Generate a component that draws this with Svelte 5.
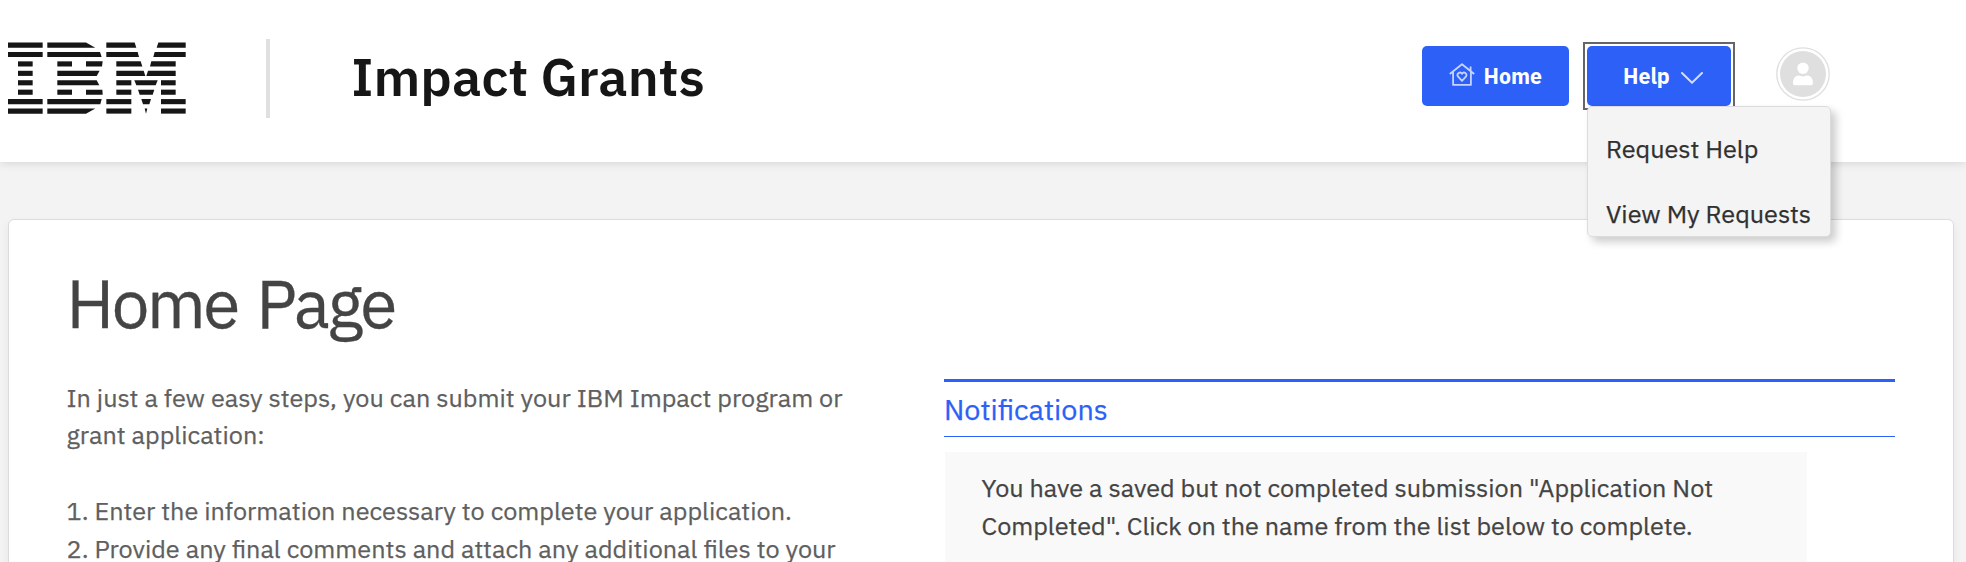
<script>
  const menu = ['Request Help', 'View My Requests'];
  const intro = ['In just a few easy steps, you can submit your IBM Impact program or', 'grant application:'];
  const steps = [
    '1. Enter the information necessary to complete your application.',
    '2. Provide any final comments and attach any additional files to your'
  ];
  const notice = [
    'You have a saved but not completed submission "Application Not',
    'Completed". Click on the name from the list below to complete.'
  ];
  // Each inner list holds the stripe segments of one row as [top-left, top-right, bottom-right, bottom-left].
  const stripes = [
    [[24,128,128,24],[142,258,286,142],[319,404,409,319],[475,557,557,470]],
    [[24,128,128,24],[142,300,305,142],[319,413,417,319],[464,557,557,460]],
    [[54,98,98,54],[172,216,216,172],[258,308,306,258],[349,422,427,349],[454,527,527,450]],
    [[54,98,98,54],[172,299,290,172],[349,431,436,349],[444,527,527,439]],
    [[54,98,98,54],[172,290,298,172],[349,394,394,349],[403,473,467,409],[483,527,527,483]],
    [[54,98,98,54],[172,216,216,172],[258,307,308,258],[349,394,394,349],[414,463,458,419],[483,527,527,483]],
    [[24,128,128,24],[142,305,301,142],[319,394,394,319],[424,453,448,429],[483,557,557,483]],
    [[24,128,128,24],[142,286,258,142],[319,394,394,319],[434,442,438,438],[483,557,557,483]]
  ];
  const pts = ([a, b, c, d], row) => {
    const y = 1.5 + row * 28.3;
    const z = y + 15.4;
    return `${a},${y} ${b},${y} ${c},${z} ${d},${z}`;
  };
</script>

<header>
  <svg class="logo" viewBox="24 0 534 217" preserveAspectRatio="none" role="img" aria-label="IBM">
    {#each stripes as row, i}
      {#each row as seg}
        <polygon points={pts(seg, i)} />
      {/each}
    {/each}
  </svg>
  <div class="divider"></div>
  <div class="brand">Impact Grants</div>
  <nav>
    <button class="btn home">
      <svg class="house" viewBox="0 0 26 24" aria-hidden="true">
        <path d="M.8 11 13 1.2 25.2 11M4.1 9v12.9h17.8V9M21.6 8V3.4" />
        <path d="M13 17.8 8.9 13.4a2.4 2.4 0 0 1 4.1-2.6 2.4 2.4 0 0 1 4.1 2.6Z" />
      </svg>
      <span>Home</span>
    </button>
    <div class="help">
      <button class="btn open">
        <span>Help</span>
        <svg class="chevron" viewBox="0 0 22 12" aria-hidden="true"><path d="M1 1 11 10.7 21 1" /></svg>
      </button>
      <ul class="menu">
        {#each menu as m}<li>{m}</li>{/each}
      </ul>
    </div>
    <svg class="avatar" viewBox="0 0 54 54" aria-hidden="true">
      <circle cx="27" cy="27" r="26.2" fill="#fff" stroke="#dfdfdf" stroke-width="1.3" />
      <circle cx="27" cy="27" r="23" fill="#dfdfdf" />
      <circle cx="27" cy="21.3" r="5.7" fill="#fff" />
      <path d="M17 36.2c0-4.6 2.3-7.6 6-7.6.9 0 1.9 1 4 1s3.1-1 4-1c3.7 0 6 3 6 7.6 0 1.3-.8 2-2 2H19c-1.2 0-2-.7-2-2Z" fill="#fff" />
    </svg>
  </nav>
</header>

<main>
  <h1>Home Page</h1>
  <div class="cols">
    <div class="intro">
      <p>{#each intro as l}<span>{l}</span>{/each}</p>
      <p>{#each steps as l}<span>{l}</span>{/each}</p>
    </div>
    <section>
      <h2>Notifications</h2>
      <div class="notice">{#each notice as l}<span>{l}</span>{/each}</div>
    </section>
  </div>
</main>

<style>
  :global(html) { overflow: hidden; }
  :global(body) { background: #f3f3f3; font-family: "IBM Plex Sans", Roboto, sans-serif; }
  :global(#app) { height: 562px; overflow: hidden; }
  header {
    position: relative;
    z-index: 1;
    box-sizing: border-box;
    display: flex;
    align-items: flex-start;
    height: 162px;
    padding-left: 8px;
    background: #fff;
    box-shadow: 0 1px 9px rgba(0, 0, 0, 0.13);
  }
  .logo { flex: none; width: 178px; height: 72.3px; margin-top: 42.3px; fill: #161616; }
  .divider { width: 4px; height: 79px; margin: 39px 0 0 80px; background: #e0e0e0; }
  .brand {
    margin: 42.5px 0 0 81.3px;
    font-size: 52.7px;
    font-weight: 600;
    line-height: 66px;
    color: #161616;
    white-space: nowrap;
  }
  nav { display: flex; align-items: flex-start; margin: 46px 136px 0 auto; }
  .btn {
    box-sizing: border-box;
    display: flex;
    align-items: center;
    height: 60px;
    padding: 0;
    border: 0;
    border-radius: 5px;
    background: #2d60f6;
    color: #fff;
    font: 700 21.3px/30px "IBM Plex Sans", Roboto, sans-serif;
  }
  .home { width: 147px; padding-left: 27px; }
  .house {
    width: 26px;
    height: 24px;
    margin: -2px 9px 0 -0.5px;
    fill: none;
    stroke: #c6d3fc;
    stroke-width: 1.8;
    stroke-linejoin: round;
  }
  .help { position: relative; margin-left: 18px; }
  .help::before { content: ""; position: absolute; inset: -4px; border: 2px solid #666; }
  .open { position: relative; width: 144px; padding-left: 36px; box-shadow: 0 0 0 2px #fff; }
  .chevron {
    width: 22px;
    height: 12px;
    margin: 4px 0 0 11px;
    fill: none;
    stroke: #d3ddfd;
    stroke-width: 2;
    stroke-linecap: round;
  }
  .menu {
    position: absolute;
    top: 60px;
    left: 0;
    box-sizing: border-box;
    width: 244px;
    height: 131px;
    margin: 0;
    padding: 9px 0 0 18px;
    list-style: none;
    background: #f4f4f4;
    border: 1px solid #dcdcdc;
    border-radius: 5px;
    box-shadow: 5px 5px 9px rgba(0, 0, 0, 0.2);
    color: #303030;
    font-size: 25.2px;
    line-height: 65px;
    white-space: nowrap;
    -webkit-text-stroke: 0.25px;
  }
  .avatar { width: 54px; height: 54px; margin: 1px 0 0 45px; }
  main {
    box-sizing: border-box;
    width: 1946px;
    height: 500px;
    margin: 57px 0 0 8px;
    padding: 42.8px 57.5px 0;
    background: #fff;
    border: 1px solid #dcdcdc;
    border-radius: 6px;
    box-shadow: 0 4px 8px rgba(0, 0, 0, 0.06);
  }
  h1 {
    margin: 0 0 36px;
    color: #444;
    font-size: 67.3px;
    font-weight: 400;
    line-height: 80px;
    letter-spacing: -2.4px;
    word-spacing: 5px;
    -webkit-text-stroke: 0.3px;
  }
  .cols { display: grid; grid-template-columns: 877.5px 951px; }
  .intro { color: #5f5f5f; font-size: 25.23px; line-height: 37.3px; -webkit-text-stroke: 0.25px; }
  p { margin: 0 0 38.7px; }
  p + p { line-height: 37.75px; }
  span { display: block; white-space: nowrap; }
  h2 {
    box-sizing: border-box;
    height: 58px;
    margin: 0 0 15px;
    border-top: 3px solid #2d60f6;
    border-bottom: 1px solid #2d60f6;
    color: #2d60f6;
    font-size: 28.8px;
    font-weight: 400;
    line-height: 54px;
    -webkit-text-stroke: 0.25px;
  }
  .notice {
    box-sizing: border-box;
    width: 862px;
    height: 140px;
    margin-left: 1px;
    padding: 17.6px 0 0 36.5px;
    background: #f9f9f9;
    color: #444;
    font-size: 25.2px;
    line-height: 38px;
    -webkit-text-stroke: 0.25px;
  }
</style>
